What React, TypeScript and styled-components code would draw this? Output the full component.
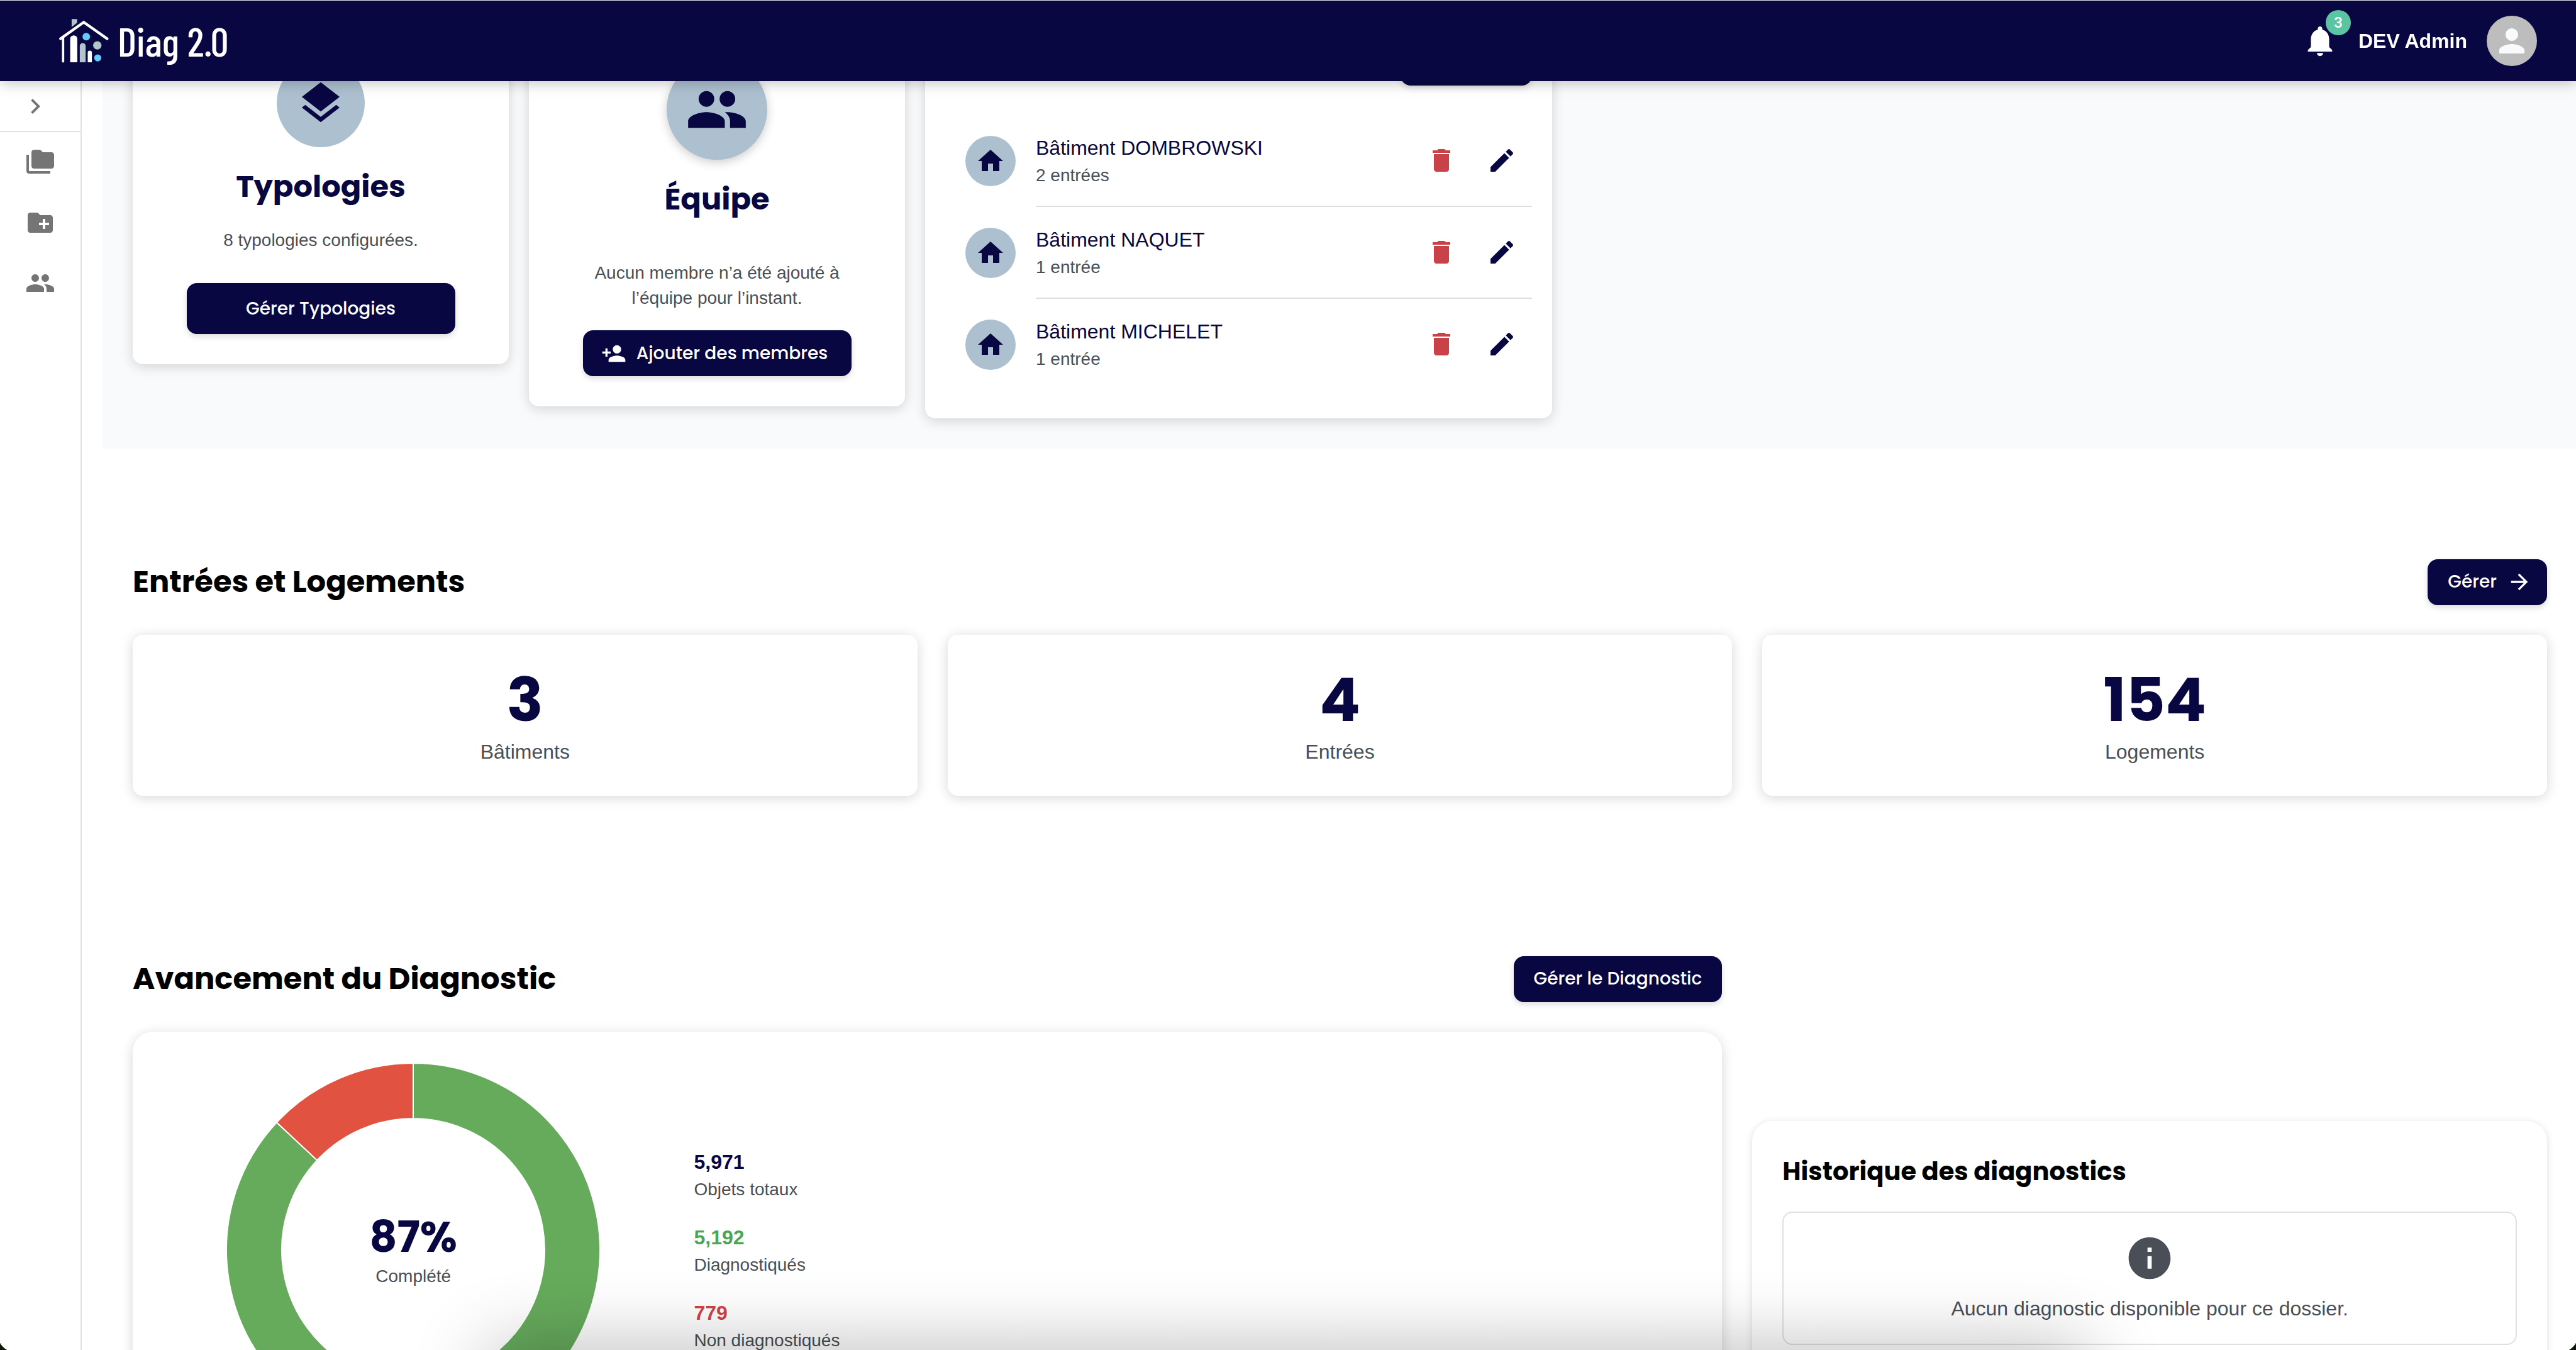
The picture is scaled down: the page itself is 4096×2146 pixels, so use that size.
import React from "react";
import styled, { createGlobalStyle } from "styled-components";

const navy = "#080742";
const slate = "#4a4f57";
const mist = "#adc0d0";
const line = "#e0e0e0";
const heading = `Poppins, Inter, "Liberation Sans", sans-serif`;
const body = `"Liberation Sans", Arial, sans-serif`;

const GlobalStyle = createGlobalStyle`
  *, *::before, *::after { box-sizing: border-box; }
  html, body { margin: 0; background: #fff; overflow: hidden; }
  body { font-family: ${body}; color: ${slate}; }
  h1, h2, h3, p, ul, dl, dd { margin: 0; padding: 0; }
  ul { list-style: none; }
  button { border: 0; background: none; padding: 0; color: inherit; cursor: pointer; }
`;

/* ---------- icons ---------- */

const icons = {
  chevron: "M10 6 8.59 7.41 13.17 12l-4.58 4.59L10 18l6-6z",
  folders:
    "M3 6H1v13c0 1.1.9 2 2 2h17v-2H3V6zm18-2h-7l-2-2H7c-1.1 0-1.99.9-1.99 2L5 15c0 1.1.9 2 2 2h14c1.1 0 2-.9 2-2V6c0-1.1-.9-2-2-2z",
  newFolder:
    "M20 6h-8l-2-2H4c-1.11 0-1.99.89-1.99 2L2 18c0 1.11.89 2 2 2h16c1.11 0 2-.89 2-2V8c0-1.11-.89-2-2-2zm-1 8h-3v3h-2v-3h-3v-2h3V9h2v3h3v2z",
  people:
    "M16 11c1.66 0 2.99-1.34 2.99-3S17.66 5 16 5c-1.66 0-3 1.34-3 3s1.34 3 3 3zm-8 0c1.66 0 2.99-1.34 2.99-3S9.66 5 8 5C6.34 5 5 6.34 5 8s1.34 3 3 3zm0 2c-2.33 0-7 1.17-7 3.5V19h14v-2.5c0-2.33-4.67-3.5-7-3.5zm8 0c-.29 0-.62.02-.97.05 1.16.84 1.97 1.97 1.97 3.45V19h6v-2.5c0-2.33-4.67-3.5-7-3.5z",
  layers:
    "m11.99 18.54-7.37-5.73L3 14.07l9 7 9-7-1.63-1.27-7.38 5.74zM12 16l7.36-5.73L21 9l-9-7-9 7 1.63 1.27L12 16z",
  personAdd:
    "M15 12c2.21 0 4-1.79 4-4s-1.79-4-4-4-4 1.79-4 4 1.79 4 4 4zm-9-2V7H4v3H1v2h3v3h2v-3h3v-2H6zm9 4c-2.67 0-8 1.34-8 4v2h16v-2c0-2.66-5.33-4-8-4z",
  home: "M10 20v-6h4v6h5v-8h3L12 3 2 12h3v8z",
  trash: "M6 19c0 1.1.9 2 2 2h8c1.1 0 2-.9 2-2V7H6v12zM19 4h-3.500l-1-1h-5l-1 1H5v2h14V4z",
  pencil:
    "M3 17.25V21h3.75L17.81 9.940l-3.750-3.750L3 17.250zM20.710 7.040c.39-.39.39-1.020 0-1.410l-2.340-2.340c-.39-.39-1.020-.39-1.410 0l-1.830 1.830 3.750 3.750 1.830-1.830z",
  arrow: "m12 4-1.410 1.410L16.170 11H4v2h12.170l-5.580 5.590L12 20l8-8z",
  info: "M12 2C6.480 2 2 6.480 2 12s4.480 10 10 10 10-4.480 10-10S17.520 2 12 2zm1 15h-2v-6h2v6zm0-8h-2V7h2v2z",
  bell: "M12 22c1.100 0 2-.9 2-2h-4c0 1.100.89 2 2 2zm6-6v-5c0-3.070-1.640-5.640-4.500-6.320V4c0-.83-.67-1.500-1.500-1.500s-1.500.67-1.500 1.500v.68C7.630 5.360 6 7.920 6 11v5l-2 2v1h16v-1l-2-2z",
  person:
    "M12 12c2.210 0 4-1.790 4-4s-1.790-4-4-4-4 1.790-4 4 1.790 4 4 4zm0 2c-2.670 0-8 1.340-8 4v2h16v-2c0-2.660-5.330-4-8-4z",
};

function Icon({ name, size = 48 }: { name: keyof typeof icons; size?: number }) {
  return (
    <svg width={size} height={size} viewBox="0 0 24 24" fill="currentColor" aria-hidden="true">
      <path d={icons[name]} />
    </svg>
  );
}

function HouseLogo() {
  return (
    <svg width="79" height="70" viewBox="104 86 236 211" aria-hidden="true">
      <path d="M163 87h26v18l-26 20z" fill="#b3c5c9" />
      <path d="M122 176v114" stroke="#fff" strokeWidth="11" strokeLinecap="round" />
      <path d="M110 181 221 102l112 79" fill="none" stroke="#fff" strokeWidth="13" strokeLinecap="round" />
      <path d="M156 294V182a17 17 0 0 1 34 0v112z" fill="#fff" />
      <path d="M202 294v-78a14 14 0 0 1 28 0v78z" fill="#b3c5c9" />
      <path d="M240 294v-46a10 10 0 0 1 20 0v46z" fill="#fff" />
      <circle cx="233" cy="171" r="18" fill="#62ccff" />
      <circle cx="286" cy="213" r="20" fill="#b3c5c9" />
      <circle cx="288" cy="273" r="17" fill="#62ccff" />
    </svg>
  );
}

/* ---------- shell ---------- */

const Page = styled.div`
  position: relative;
  display: flex;
  height: 100vh;
  overflow: hidden;
`;

const TopBar = styled.header`
  position: fixed;
  z-index: 10;
  top: 0;
  left: 0;
  right: 0;
  height: 129px;
  display: flex;
  align-items: center;
  justify-content: space-between;
  padding: 0 62px 0 94px;
  color: #fff;
  background: ${navy};
  border-top: 1px solid #dfe3e3;
  box-shadow: 0 4px 20px rgba(0, 0, 0, 0.22);
`;

const Brand = styled.a`
  display: flex;
  align-items: center;
  gap: 14px;
  color: #fff;
  text-decoration: none;
  font: 500 64px/72px "Barlow Condensed", "Liberation Sans Narrow", sans-serif;
`;

const Account = styled.div`
  display: flex;
  align-items: center;
`;

const BellButton = styled.button`
  position: relative;
  display: flex;
  margin-right: 32px;
`;

const Badge = styled.span`
  position: absolute;
  top: -20px;
  right: -20px;
  width: 40px;
  height: 40px;
  border-radius: 50%;
  background: #5bc5a3;
  font: 500 24px/40px Roboto, sans-serif;
  text-align: center;
`;

const UserName = styled.span`
  font-size: 32px;
  font-weight: 700;
  line-height: 48px;
`;

const Avatar = styled.span`
  display: grid;
  place-items: center;
  width: 80px;
  height: 80px;
  margin-left: 31px;
  border-radius: 50%;
  color: #f9fafc;
  background: #bdbdbd;
`;

const SideBar = styled.nav`
  flex: none;
  width: 130px;
  padding-top: 129px;
  border-right: 2px solid ${line};
  color: #757575;
`;

const Toggle = styled.button`
  display: flex;
  align-items: center;
  width: 100%;
  height: 81px;
  padding-left: 32px;
  border-bottom: 2px solid ${line};
`;

const SideLink = styled.a`
  display: grid;
  place-items: center;
  height: 96px;
  color: inherit;
`;

const Main = styled.main`
  flex: 1;
  min-width: 0;
  padding-left: 33px;
`;

/* ---------- shared parts ---------- */

const Button = styled.button<{ $wide?: boolean; $tall?: boolean }>`
  display: inline-flex;
  align-items: center;
  justify-content: center;
  gap: 16px;
  width: ${(p) => (p.$wide ? "427px" : "auto")};
  height: ${(p) => (p.$tall ? "81px" : "73px")};
  padding: 0 32px;
  border-radius: 16px;
  color: #fff;
  background: ${navy};
  font: 500 28px/48px ${heading};
  white-space: nowrap;
  box-shadow: 0 4px 10px rgba(0, 0, 0, 0.14);
`;

const StartIcon = styled.span`
  display: flex;
  margin-left: -8px;
`;

const EndIcon = styled.span`
  display: flex;
  margin-right: -8px;
`;

const Card = styled.section`
  border-radius: 16px;
  background: #fff;
  box-shadow: 0 4px 20px rgba(0, 0, 0, 0.16);
`;

const SectionHead = styled.div`
  display: flex;
  align-items: center;
  justify-content: space-between;
  height: 72px;
  margin-bottom: 48px;
`;

const SectionTitle = styled.h2`
  color: #000;
  font: 700 48px/72px ${heading};
`;

/* ---------- top cards ---------- */

const Overview = styled.div`
  display: flex;
  align-items: flex-start;
  gap: 32px;
  padding: 46px 46px 48px 48px;
  background: #f9fafc;
`;

const InfoCard = styled(Card)`
  display: flex;
  flex-direction: column;
  align-items: center;
  width: 598px;
  padding: 48px;
  text-align: center;
`;

const Disc = styled.span<{ $size: number; $raised?: boolean }>`
  flex: none;
  display: grid;
  place-items: center;
  width: ${(p) => p.$size}px;
  height: ${(p) => p.$size}px;
  border-radius: 50%;
  color: ${navy};
  background: ${mist};
  box-shadow: ${(p) => (p.$raised ? "0 4px 16px rgba(0, 0, 0, 0.2)" : "none")};
`;

const InfoTitle = styled.h2`
  margin-top: 27px;
  color: ${navy};
  font: 700 48px/72px ${heading};
`;

const InfoText = styled.p<{ $gap: number; $after: number }>`
  max-width: 420px;
  margin-top: ${(p) => p.$gap}px;
  margin-bottom: ${(p) => p.$after}px;
  font-size: 28px;
  line-height: 40px;
`;

const BuildingCard = styled(Card)`
  width: 997px;
  padding: 17px 32px 44px 64px;
`;

const BuildingHead = styled.div`
  display: flex;
  justify-content: flex-end;
  height: 72px;
  margin-bottom: 48px;
`;

const Building = styled.li`
  display: flex;
  align-items: center;
  gap: 32px;

  &:last-child > div {
    border-color: transparent;
  }
`;

const BuildingBody = styled.div`
  flex: 1;
  display: flex;
  align-items: center;
  gap: 16px;
  height: 146px;
  padding-right: 8px;
  border-bottom: 2px solid ${line};
`;

const BuildingText = styled.div`
  flex: 1;
`;

const BuildingName = styled.h3`
  color: ${navy};
  font-size: 32px;
  font-weight: 400;
  line-height: 48px;
`;

const Caption = styled.p`
  font-size: 28px;
  line-height: 40px;
`;

const IconButton = styled.button<{ $tone: string }>`
  display: grid;
  place-items: center;
  width: 80px;
  height: 80px;
  color: ${(p) => p.$tone};
`;

/* ---------- counters ---------- */

const Block = styled.section<{ $gap: number }>`
  padding: ${(p) => p.$gap}px 46px 0 48px;
`;

const Counters = styled.div`
  display: grid;
  grid-template-columns: repeat(3, 1fr);
  gap: 48px;
`;

const Counter = styled(Card)`
  padding: 46px 0;
  text-align: center;
  box-shadow: 0 3px 20px rgba(0, 0, 0, 0.16);
`;

const CounterValue = styled.p`
  color: ${navy};
  font: 700 96px/116px ${heading};
`;

const CounterLabel = styled.p`
  font-size: 32px;
  line-height: 48px;
`;

/* ---------- progress ---------- */

const Columns = styled.div`
  display: grid;
  grid-template-columns: 2fr 1fr;
  align-items: start;
  gap: 48px;
`;

const ProgressCard = styled(Card)`
  display: grid;
  grid-template-columns: 1fr 2fr;
  align-items: center;
  gap: 50px;
  padding: 50px;
  border-radius: 32px;
`;

const DonutBox = styled.div`
  position: relative;
  display: grid;
  justify-content: center;
`;

const DonutLabel = styled.div`
  position: absolute;
  inset: 0;
  display: flex;
  flex-direction: column;
  align-items: center;
  justify-content: center;
`;

const DonutValue = styled.strong`
  color: ${navy};
  font: 700 68px/84px ${heading};
`;

const Stats = styled.dl`
  display: grid;
  gap: 32px;
`;

const Stat = styled.div`
  display: flex;
  flex-direction: column-reverse;
`;

const StatValue = styled.dd<{ $tone: string }>`
  color: ${(p) => p.$tone};
  font-size: 32px;
  font-weight: 700;
  line-height: 48px;
`;

const StatLabel = styled.dt`
  font-size: 28px;
  line-height: 40px;
`;

const HistoryCard = styled(Card)`
  margin-top: 262px;
  padding: 48px;
  border-radius: 32px;
  box-shadow: 0 2px 12px rgba(0, 0, 0, 0.14);
`;

const HistoryTitle = styled.h2`
  margin-bottom: 32px;
  color: #000;
  font: 700 40px/64px ${heading};
`;

const Empty = styled.div`
  display: flex;
  flex-direction: column;
  align-items: center;
  gap: 16px;
  padding: 32px;
  border: 2px solid ${line};
  border-radius: 16px;
  font-size: 32px;
  line-height: 48px;
`;

const DockShade = styled.div`
  position: fixed;
  z-index: 20;
  top: 100%;
  left: 19%;
  right: 19%;
  height: 100px;
  pointer-events: none;
  box-shadow: 0 0 120px rgba(0, 0, 0, 0.3);
`;

const WindowCorner = styled.span<{ $side: "left" | "right" }>`
  position: fixed;
  z-index: 21;
  bottom: 0;
  ${(p) => p.$side}: 0;
  width: 12px;
  height: 12px;
  background: radial-gradient(
    circle at ${(p) => (p.$side === "left" ? "25px" : "-13px")} -13px,
    transparent 28px,
    #10160a 29px
  );
`;

function arc(cx: number, from: number, to: number, outer: number, inner: number) {
  const at = (turn: number, r: number) => {
    const a = turn * 2 * Math.PI - Math.PI / 2;
    return `${cx + r * Math.cos(a)} ${cx + r * Math.sin(a)}`;
  };
  const large = to - from > 0.5 ? 1 : 0;
  return `M${at(from, outer)}A${outer} ${outer} 0 ${large} 1 ${at(to, outer)}L${at(to, inner)}A${inner} ${inner} 0 ${large} 0 ${at(from, inner)}Z`;
}

function Donut({ done, total }: { done: number; total: number }) {
  const share = done / total;
  return (
    <DonutBox>
      <svg width="594" height="594" viewBox="0 0 594 594" stroke="#fff" strokeWidth="2" aria-hidden="true">
        <path d={arc(297, 0, share, 297, 209)} fill="#66ab5c" />
        <path d={arc(297, share, 1, 297, 209)} fill="#e15241" />
      </svg>
      <DonutLabel>
        <DonutValue>{Math.round(share * 100)}%</DonutValue>
        <Caption>Complété</Caption>
      </DonutLabel>
    </DonutBox>
  );
}

const buildings = [
  { name: "Bâtiment DOMBROWSKI", entries: "2 entrées" },
  { name: "Bâtiment NAQUET", entries: "1 entrée" },
  { name: "Bâtiment MICHELET", entries: "1 entrée" },
];

const counters = [
  { value: 3, label: "Bâtiments" },
  { value: 4, label: "Entrées" },
  { value: 154, label: "Logements" },
];

const stats = [
  { value: 5971, label: "Objets totaux", tone: navy },
  { value: 5192, label: "Diagnostiqués", tone: "#4ca64f" },
  { value: 779, label: "Non diagnostiqués", tone: "#d0434a" },
];

const sideLinks = [
  { icon: "folders", label: "Dossiers" },
  { icon: "newFolder", label: "Nouveau dossier" },
  { icon: "people", label: "Équipe" },
] as const;

export default function App() {
  return (
    <>
      <GlobalStyle />
      <Page>
        <TopBar>
          <Brand href="#">
            <HouseLogo />
            Diag 2.0
          </Brand>
          <Account>
            <BellButton aria-label="Notifications">
              <Icon name="bell" size={58} />
              <Badge>3</Badge>
            </BellButton>
            <UserName>DEV Admin</UserName>
            <Avatar>
              <Icon name="person" size={60} />
            </Avatar>
          </Account>
        </TopBar>

        <SideBar>
          <Toggle aria-label="Ouvrir le menu">
            <Icon name="chevron" />
          </Toggle>
          <ul>
            {sideLinks.map((link) => (
              <li key={link.icon}>
                <SideLink href="#" aria-label={link.label}>
                  <Icon name={link.icon} />
                </SideLink>
              </li>
            ))}
          </ul>
        </SideBar>

        <Main>
          <Overview>
            <InfoCard>
              <Disc $size={140}>
                <Icon name="layers" size={80} />
              </Disc>
              <InfoTitle>Typologies</InfoTitle>
              <InfoText $gap={29} $after={48}>
                8 typologies configurées.
              </InfoText>
              <Button $wide $tall>
                Gérer Typologies
              </Button>
            </InfoCard>

            <InfoCard>
              <Disc $size={160} $raised>
                <Icon name="people" size={100} />
              </Disc>
              <InfoTitle>Équipe</InfoTitle>
              <InfoText $gap={61} $after={31}>
                Aucun membre n’a été ajouté à l’équipe pour l’instant.
              </InfoText>
              <Button $wide>
                <StartIcon>
                  <Icon name="personAdd" size={40} />
                </StartIcon>
                Ajouter des membres
              </Button>
            </InfoCard>

            <BuildingCard>
              <BuildingHead>
                <Button>Tout gérer</Button>
              </BuildingHead>
              <ul>
                {buildings.map((b) => (
                  <Building key={b.name}>
                    <Disc $size={80}>
                      <Icon name="home" />
                    </Disc>
                    <BuildingBody>
                      <BuildingText>
                        <BuildingName>{b.name}</BuildingName>
                        <Caption>{b.entries}</Caption>
                      </BuildingText>
                      <IconButton $tone="#c94248" aria-label={`Supprimer ${b.name}`}>
                        <Icon name="trash" />
                      </IconButton>
                      <IconButton $tone={navy} aria-label={`Modifier ${b.name}`}>
                        <Icon name="pencil" />
                      </IconButton>
                    </BuildingBody>
                  </Building>
                ))}
              </ul>
            </BuildingCard>
          </Overview>

          <Block $gap={176}>
            <SectionHead>
              <SectionTitle>Entrées et Logements</SectionTitle>
              <Button>
                Gérer
                <EndIcon>
                  <Icon name="arrow" size={40} />
                </EndIcon>
              </Button>
            </SectionHead>
            <Counters>
              {counters.map((c) => (
                <Counter key={c.label}>
                  <CounterValue>{c.value}</CounterValue>
                  <CounterLabel>{c.label}</CounterLabel>
                </Counter>
              ))}
            </Counters>
          </Block>

          <Block $gap={255}>
            <Columns>
              <div>
                <SectionHead>
                  <SectionTitle>Avancement du Diagnostic</SectionTitle>
                  <Button>Gérer le Diagnostic</Button>
                </SectionHead>
                <ProgressCard>
                  <Donut done={5192} total={5971} />
                  <Stats>
                    {stats.map((s) => (
                      <Stat key={s.label}>
                        <StatLabel>{s.label}</StatLabel>
                        <StatValue $tone={s.tone}>{s.value.toLocaleString("en-US")}</StatValue>
                      </Stat>
                    ))}
                  </Stats>
                </ProgressCard>
              </div>
              <HistoryCard>
                <HistoryTitle>Historique des diagnostics</HistoryTitle>
                <Empty>
                  <Icon name="info" size={80} />
                  <p>Aucun diagnostic disponible pour ce dossier.</p>
                </Empty>
              </HistoryCard>
            </Columns>
          </Block>
        </Main>
        <DockShade />
        <WindowCorner $side="left" />
        <WindowCorner $side="right" />
      </Page>
    </>
  );
}
